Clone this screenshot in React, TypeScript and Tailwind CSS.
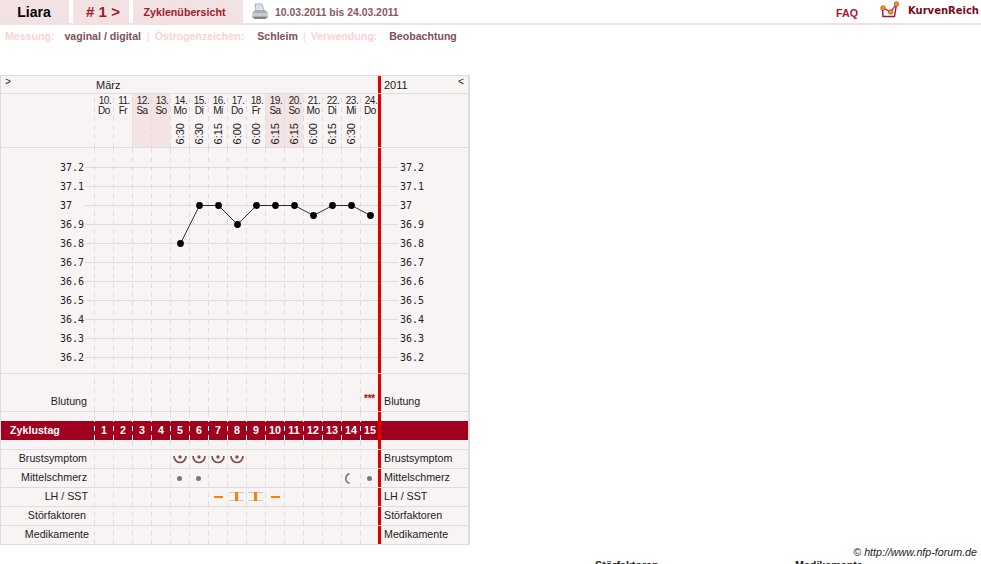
const DAYS = [
  { d: '10.', w: 'Do', t: '', off: false },
  { d: '11.', w: 'Fr', t: '', off: false },
  { d: '12.', w: 'Sa', t: '', off: true },
  { d: '13.', w: 'So', t: '', off: true },
  { d: '14.', w: 'Mo', t: '6:30', off: false },
  { d: '15.', w: 'Di', t: '6:30', off: false },
  { d: '16.', w: 'Mi', t: '6:15', off: false },
  { d: '17.', w: 'Do', t: '6:00', off: false },
  { d: '18.', w: 'Fr', t: '6:00', off: false },
  { d: '19.', w: 'Sa', t: '6:15', off: true },
  { d: '20.', w: 'So', t: '6:15', off: true },
  { d: '21.', w: 'Mo', t: '6:00', off: false },
  { d: '22.', w: 'Di', t: '6:15', off: false },
  { d: '23.', w: 'Mi', t: '6:30', off: false },
  { d: '24.', w: 'Do', t: '', off: false },
]

const TEMPS = ['37.2', '37.1', '37', '36.9', '36.8', '36.7', '36.6', '36.5', '36.4', '36.3', '36.2']
const CURVE = [36.8, 37, 37, 36.9, 37, 37, 37, 36.95, 37, 37, 36.95]
const dash = 'bg-[linear-gradient(#dddddd_55%,transparent_55%)] bg-[length:1px_9px] bg-repeat-y bg-left'

function Cells({ children, light }: { children?: (i: number) => React.ReactNode; light?: boolean }) {
  return (
    <div className="flex h-full w-[284px] shrink-0">
      {DAYS.map((_, i) => (
        <div
          key={i}
          className={`flex h-full w-[19px] shrink-0 items-center justify-center ${
            light
              ? 'bg-[linear-gradient(#ffffff_55%,transparent_55%)] bg-[length:1px_9px] bg-repeat-y bg-left'
              : dash
          }`}
        >
          {children?.(i)}
        </div>
      ))}
    </div>
  )
}

function RedLine() {
  return <div className="h-full w-[3px] shrink-0 bg-[#e00000]" />
}

function SymptomRow({ label, pr, children }: { label: string; pr: string; children?: (i: number) => React.ReactNode }) {
  return (
    <div className="flex h-[19px] border-b border-[#dddddd]">
      <div className={`w-[93px] shrink-0 text-right text-[10.700px] leading-[17px] text-[#222] ${pr}`}>{label}</div>
      <Cells>{children}</Cells>
      <RedLine />
      <div className="pl-[3px] text-[10.700px] leading-[17px] text-[#222]">{label}</div>
    </div>
  )
}

function Smile() {
  return (
    <svg width="14" height="12" viewBox="0 0 14 12" className="mt-px">
      <circle cx="7" cy="3" r="1.700" fill="#7f4f55" />
      <path d="M1 2a6 6.500 0 0 0 12 0" fill="none" stroke="#7f4f55" strokeWidth="1.700" />
    </svg>
  )
}

function GrayDot() {
  return <div className="h-[5px] w-[5px] rounded-full bg-[#777777]" />
}

function LhMark() {
  return (
    <svg width="15" height="10" viewBox="0 0 15 10">
      <path d="M0 .5h15M0 8.500h15" stroke="#cccccc" />
      <rect x="6" y="0" width="3" height="9" fill="#ff8000" />
    </svg>
  )
}

function Printer() {
  return (
    <svg width="18" height="18" viewBox="0 0 18 18">
      <path d="M4 1h7l2 7H5z" fill="#e8eef4" stroke="#8fa0b0" strokeWidth=".8" />
      <path d="M5 3h6M5.500 5h6" stroke="#b5c4d2" strokeWidth=".7" />
      <path d="M1 10l3-3h10l3 3v4l-2 2H3l-2-2z" fill="#a9adb2" />
      <path d="M1 10h16v3H1z" fill="#c9cdd1" />
      <path d="M3 14h12v2H3z" fill="#7f8489" />
    </svg>
  )
}

function Logo() {
  return (
    <svg width="20" height="18" viewBox="0 0 20 18">
      <path d="M0 8h19M5 2v15M13 2v15" stroke="#e8e8e8" strokeWidth=".7" />
      <path d="M2.500 6.500 3 15.500h11.500L16.500 3" fill="none" stroke="#a0104c" strokeWidth="1.400" />
      <path d="M2.500 6.500 10.500 11 16.500 3" fill="none" stroke="#a0104c" strokeWidth="1.200" />
      <circle cx="3" cy="7" r="2.300" fill="#f59a00" stroke="#b03020" strokeWidth=".6" />
      <circle cx="10.500" cy="11" r="2.300" fill="#f59a00" stroke="#b03020" strokeWidth=".6" />
      <circle cx="16.500" cy="3" r="2.300" fill="#f59a00" stroke="#b03020" strokeWidth=".6" />
    </svg>
  )
}

function Header() {
  return (
    <div className="flex h-[25px] items-stretch border-b-2 border-[#f3dfe1]">
      <div className="flex w-[69px] items-center justify-center bg-[#f3e2e3] pr-[1px] pt-[2px] text-[14px] font-bold text-black">Liara</div>
      <div className="ml-1 flex w-[56px] items-center justify-center bg-[#f3e2e3] pl-[4px] pt-[2px] text-[15px] font-bold text-[#a5182c]">
        # 1 &gt;
      </div>
      <div className="ml-1 flex w-[110px] items-center justify-center bg-[#f3e2e3] pr-[7px] pt-[2px] text-[10.700px] font-bold text-[#a5182c]">
        Zyklenübersicht
      </div>
      <div className="ml-2 flex items-center">
        <Printer />
      </div>
      <div className="ml-[6px] flex items-center pt-[2px] text-[10.400px] font-bold text-[#8a5a62]">10.03.2011 bis 24.03.2011</div>
      <div className="ml-auto mr-[22px] flex items-center pt-[4px] text-[10.700px] font-bold text-[#a5182c]">FAQ</div>
      <div className="mr-[8px] flex items-start pt-[1px]">
        <Logo />
      </div>
      <div className="mr-[2px] pt-[3px] font-['DejaVu_Sans'] text-[10px] font-bold text-[#7a0a20]">KurvenReich</div>
    </div>
  )
}

function Info() {
  return (
    <div className="flex h-[22px] items-center pl-[5px] pt-[1px] text-[10.600px] font-bold text-[#fbd2d2]">
      <span>Messung:</span>
      <span className="ml-[10px] text-[#7e5058]">vaginal / digital</span>
      <span className="ml-[6px] font-normal">|</span>
      <span className="ml-[5px]">Östrogenzeichen:</span>
      <span className="ml-[13px] text-[#7e5058]">Schleim</span>
      <span className="ml-[5px] font-normal">|</span>
      <span className="ml-[5px]">Verwendung:</span>
      <span className="ml-[12px] text-[#7e5058]">Beobachtung</span>
    </div>
  )
}

function Chart() {
  return (
    <div className="flex h-[226px] border-b border-[#dddddd]">
      <div className="w-[93px] shrink-0 pt-[10px]">
        {TEMPS.map((t) => (
          <div key={t} className="flex h-[19px] items-center pl-[59px] font-['DejaVu_Sans_Mono'] text-[10px] text-[#222]">
            {t}
          </div>
        ))}
      </div>
      <div className="relative w-[284px] shrink-0">
        <Cells />
        <svg width="294" height="225" viewBox="0 0 294 225" className="absolute left-[-9px] top-0">
          {TEMPS.map((t, i) => (
            <path key={t} d={`M0 ${19.5 + i * 19}H293`} stroke="#dddddd" />
          ))}
          <polyline
            points={CURVE.map((v, i) => `${95.5 + i * 19},${19.5 + Math.round((37.2 - v) * 190)}`).join(' ')}
            fill="none"
            stroke="#000"
            strokeWidth=".8"
          />
          {CURVE.map((v, i) => (
            <circle key={i} cx={95.5 + i * 19} cy={19.5 + Math.round((37.2 - v) * 190)} r="3.400" fill="#000" />
          ))}
        </svg>
      </div>
      <RedLine />
      <div className="pt-[10px]">
        {TEMPS.map((t) => (
          <div key={t} className="flex h-[19px] items-center font-['DejaVu_Sans_Mono'] text-[10px] text-[#222]">
            <div className="mr-[2px] h-px w-[17px] bg-[#dddddd]" />
            {t}
          </div>
        ))}
      </div>
    </div>
  )
}

export default function App() {
  return (
    <div className="relative h-[564px] w-[981px] overflow-hidden bg-white font-['Liberation_Sans',sans-serif]">
      <Header />
      <Info />
      <div className="mt-[28px] w-[470px] border-x-2 border-t border-[#dddddd] bg-[#f9f4f4] [border-left-width:1px]">
        {/* month row */}
        <div className="flex h-[18px] border-b border-[#dddddd] text-[11px] leading-[18px] text-[#222]">
          <div className="w-[93px] shrink-0 pl-1 font-['Liberation_Mono'] text-[10px] leading-[14px]">&gt;</div>
          <div className="w-[284px] shrink-0 pl-[2px]">März</div>
          <RedLine />
          <div className="flex-1 pl-[3px]">2011</div>
          <div className="pr-[4px] font-['Liberation_Mono'] text-[10px] leading-[14px]">&lt;</div>
        </div>

        {/* days */}
        <div className="flex h-[54px] border-b border-[#dddddd]">
          <div className="w-[93px] shrink-0" />
          <div className="flex w-[284px] shrink-0">
            {DAYS.map((day, i) => (
              <div
                key={i}
                className={`flex h-full w-[19px] shrink-0 flex-col items-center pl-[1px] pt-[2px] text-[10px] leading-[10px] tracking-[-0.5px] text-[#222] ${
                  day.off ? 'bg-[#f3e3e4]' : ''
                } ${dash}`}
              >
                <span className="pl-[2px]">{day.d}</span>
                <span>{day.w}</span>
                {day.t && (
                  <span className="mt-[7px] rotate-180 text-[11px] leading-[11px] tracking-normal [writing-mode:vertical-rl]">
                    {day.t}
                  </span>
                )}
              </div>
            ))}
          </div>
          <RedLine />
        </div>

        <Chart />

        {/* Blutung */}
        <div className="flex h-[38px] border-b border-[#dddddd]">
          <div className="w-[93px] shrink-0 pr-[7px] pt-[21px] text-right text-[10.700px] leading-[13px] text-[#222]">Blutung</div>
          <Cells>
            {(i) =>
              i === 14 && <span className="mt-[13px] text-[10px] font-bold leading-none tracking-[-0.3px] text-[#c00000]">***</span>
            }
          </Cells>
          <RedLine />
          <div className="pl-[3px] pt-[21px] text-[10.700px] leading-[13px] text-[#222]">Blutung</div>
        </div>

        <div className="flex h-[9px]">
          <div className="w-[93px] shrink-0" />
          <Cells />
          <RedLine />
        </div>

        {/* Zyklustag */}
        <div className="flex h-[19px] bg-[#a0001e] text-[10.700px] font-bold leading-[19px] text-white">
          <div className="w-[93px] shrink-0 pl-[9px]">Zyklustag</div>
          <Cells light>{(i) => <span className="pl-px">{i + 1}</span>}</Cells>
          <RedLine />
        </div>

        <div className="flex h-[10px] border-b border-[#dddddd]">
          <div className="w-[93px] shrink-0" />
          <Cells />
          <RedLine />
        </div>

        <SymptomRow label="Brustsymptom" pr="pr-[7px]">
          {(i) => i >= 4 && i <= 7 && <Smile />}
        </SymptomRow>
        <SymptomRow label="Mittelschmerz" pr="pr-[7px]">
          {(i) =>
            i === 4 || i === 5 || i === 14 ? (
              <GrayDot />
            ) : i === 13 ? (
              <svg width="8" height="11" viewBox="0 0 8 11" className="ml-[-7px]">
                <path d="M6.500 .5C1.500 3 1.500 8 6.500 10.500" fill="none" stroke="#777777" strokeWidth="1.600" />
              </svg>
            ) : null
          }
        </SymptomRow>
        <SymptomRow label="LH / SST" pr="pr-[6px]">
          {(i) =>
            i === 6 || i === 9 ? (
              <div className="ml-px h-[1.500px] w-[9px] bg-[#ff8000]" />
            ) : i === 7 || i === 8 ? (
              <LhMark />
            ) : null
          }
        </SymptomRow>
        <SymptomRow label="Störfaktoren" pr="pr-[8px]" />
        <SymptomRow label="Medikamente" pr="pr-[5px]" />
      </div>

      {/* footer */}
      <div className="mt-[1px] pr-1 text-right text-[10.700px] italic leading-[13px] text-[#222]">
        © http://www.nfp-forum.de
      </div>
      <div className="flex pl-[595px] text-[10.700px] font-bold leading-[13px] text-[#222]">
        <span className="w-[200px]">Störfaktoren</span>
        <span>Medikamente</span>
      </div>
    </div>
  )
}
